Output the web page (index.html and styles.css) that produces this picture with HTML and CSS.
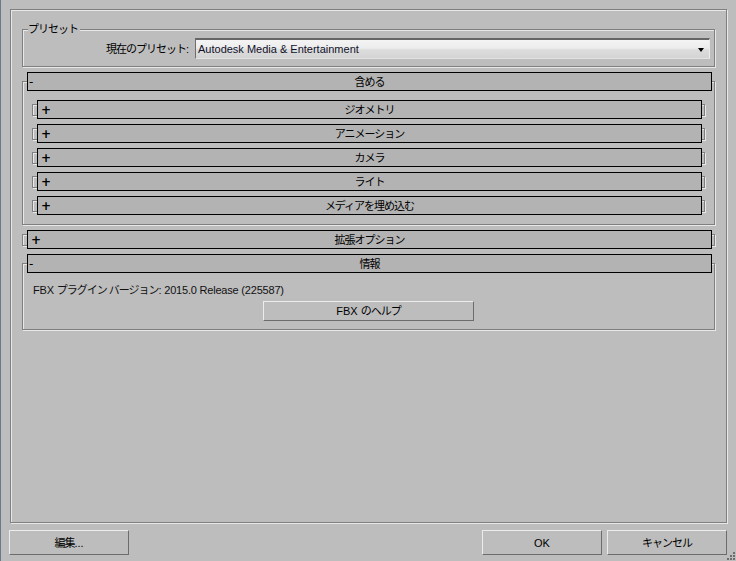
FILE: index.html
```html
<!DOCTYPE html>
<html lang="ja">
<head>
  <meta charset="UTF-8">
  <title>FBX エクスポート</title>
  <link rel="stylesheet" href="styles.css">
</head>
<body>
  <div class="dialog">
    <div class="panel">
      <fieldset class="group">
        <legend class="jp">プリセット</legend>
        <div class="preset-row">
          <label class="preset-label jp">現在のプリセット:</label>
          <div class="combo">
            <span class="combo-text">Autodesk Media &amp; Entertainment</span>
            <span class="combo-arrow"></span>
          </div>
        </div>
      </fieldset>

      <div class="rollout open include">
        <div class="head"><span class="sign minus">-</span><span class="title jp">含める</span></div>
        <div class="sublist">
          <div class="rollout closed"><div class="head"><span class="sign">+</span><span class="title jp">ジオメトリ</span></div></div>
          <div class="rollout closed"><div class="head"><span class="sign">+</span><span class="title jp">アニメーション</span></div></div>
          <div class="rollout closed"><div class="head"><span class="sign">+</span><span class="title jp">カメラ</span></div></div>
          <div class="rollout closed"><div class="head"><span class="sign">+</span><span class="title jp">ライト</span></div></div>
          <div class="rollout closed"><div class="head"><span class="sign">+</span><span class="title jp">メディアを埋め込む</span></div></div>
        </div>
      </div>

      <div class="rollout closed extended">
        <div class="head"><span class="sign">+</span><span class="title jp">拡張オプション</span></div>
      </div>

      <div class="rollout open info">
        <div class="head"><span class="sign minus">-</span><span class="title jp">情報</span></div>
        <div class="info-body">
          <p class="version">FBX <span class="jp">プラグイン バージョン</span>: 2015.0 Release (225587)</p>
          <button class="btn help-btn">FBX <span class="jp">のヘルプ</span></button>
        </div>
      </div>
    </div>

    <div class="footer">
      <button class="btn"><span class="jp">編集</span>...</button>
      <span class="spacer"></span>
      <button class="btn">OK</button>
      <button class="btn jp">キャンセル</button>
    </div>

    <!-- size grip -->
    <svg class="grip" width="10" height="10" viewBox="0 0 10 10">
      <rect x="7" y="1" width="2" height="2" fill="#6e6e6e"/>
      <rect x="4" y="4" width="2" height="2" fill="#6e6e6e"/>
      <rect x="7" y="4" width="2" height="2" fill="#6e6e6e"/>
      <rect x="1" y="7" width="2" height="2" fill="#6e6e6e"/>
      <rect x="4" y="7" width="2" height="2" fill="#6e6e6e"/>
      <rect x="7" y="7" width="2" height="2" fill="#6e6e6e"/>
    </svg>
  </div>
</body>
</html>
```

FILE: styles.css
```css
/* Max-style export dialog */
* {
  box-sizing: border-box;
}

body {
  margin: 0;
  background: #bdbdbd;
  font: 11px/14px "Liberation Sans", "Noto Sans CJK JP", sans-serif;
  color: #000;
}

/* japanese labels run a little tighter, like the UI font in Max */
.jp {
  letter-spacing: -1px;
}

.dialog {
  position: relative;
  width: 736px;
  height: 561px;
  overflow: hidden;
  display: flex;
  flex-direction: column;
  box-shadow: inset 1px 0 0 #6b7b8c;
}

/* etched frames */
.panel,
.group,
.rollout {
  border: 1px solid #7f7f7f;
  box-shadow: 1px 1px 0 #e8e8e8, inset 1px 1px 0 #e8e8e8;
}

.panel {
  margin: 9px 9px 0 10px;
  height: 514px;
  padding: 12px 11px 0 11px;
  flex-shrink: 0;
}

.group {
  margin: 0;
  min-width: 0;
  padding: 2px 4px 7px 5px;
}

.group legend {
  padding: 0 2px 0 0;
  line-height: 14px;
  background: #bdbdbd;
}

.preset-row {
  display: flex;
  align-items: center;
  gap: 7px;
}

.preset-label {
  flex: 1;
  text-align: right;
}

.combo {
  width: 515px;
  height: 21px;
  display: flex;
  align-items: center;
  padding: 0 5px 0 2px;
  border-top: 2px solid #666;
  border-left: 1px solid #6e6e6e;
  border-right: 1px solid #ececec;
  border-bottom: 1px solid #e2e2e2;
  background: linear-gradient(#f4f4f4, #ececec 45%, #dcdcdc 55%, #d4d4d4);
}

.combo-text {
  flex: 1;
  color: #10102a;
}

.combo-arrow {
  width: 0;
  height: 0;
  border-left: 3px solid transparent;
  border-right: 3px solid transparent;
  border-top: 4px solid #000;
  margin-top: 1px;
}

/* rollouts */
.head {
  display: grid;
  grid-template-columns: 1fr auto 1fr;
  align-items: center;
  height: 19px;
  border: 1px solid #000;
  background: #b3b3b3;
  margin: -10px 2px 0 4px;
}

.rollout.closed {
  height: 12px;
}

.rollout.closed > .head {
  margin-top: -5px;
}

.sign {
  padding-left: 3px;
  font-weight: bold;
  font-family: "DejaVu Sans", sans-serif;
  font-size: 12px;
}

.sign.minus {
  font-weight: normal;
  padding-left: 1px;
}

.include {
  margin-top: 14px;
}

.sublist {
  display: flex;
  flex-direction: column;
  gap: 12px;
  padding: 13px 9px 12px;
}

.extended {
  margin-top: 9px;
}

.info {
  margin-top: 17px;
}

.info-body {
  padding: 10px 0 8px;
}

.version {
  margin: 0;
  padding-left: 10px;
  color: #111;
  letter-spacing: -0.2px;
}

/* buttons */
.btn {
  font: inherit;
  color: #000;
  background: #bdbdbd;
  border: 1px solid;
  border-color: #ececec #6c6c6c #6c6c6c #ececec;
  padding: 0;
}

.help-btn {
  display: block;
  width: 211px;
  height: 20px;
  margin: 4px auto 0;
}

.footer {
  display: flex;
  gap: 5px;
  margin-top: 7px;
  padding: 0 9px;
}

.footer .btn {
  width: 120px;
  height: 25px;
}

.spacer {
  flex: 1;
}

.grip {
  position: absolute;
  right: 0;
  bottom: 0;
}
```
